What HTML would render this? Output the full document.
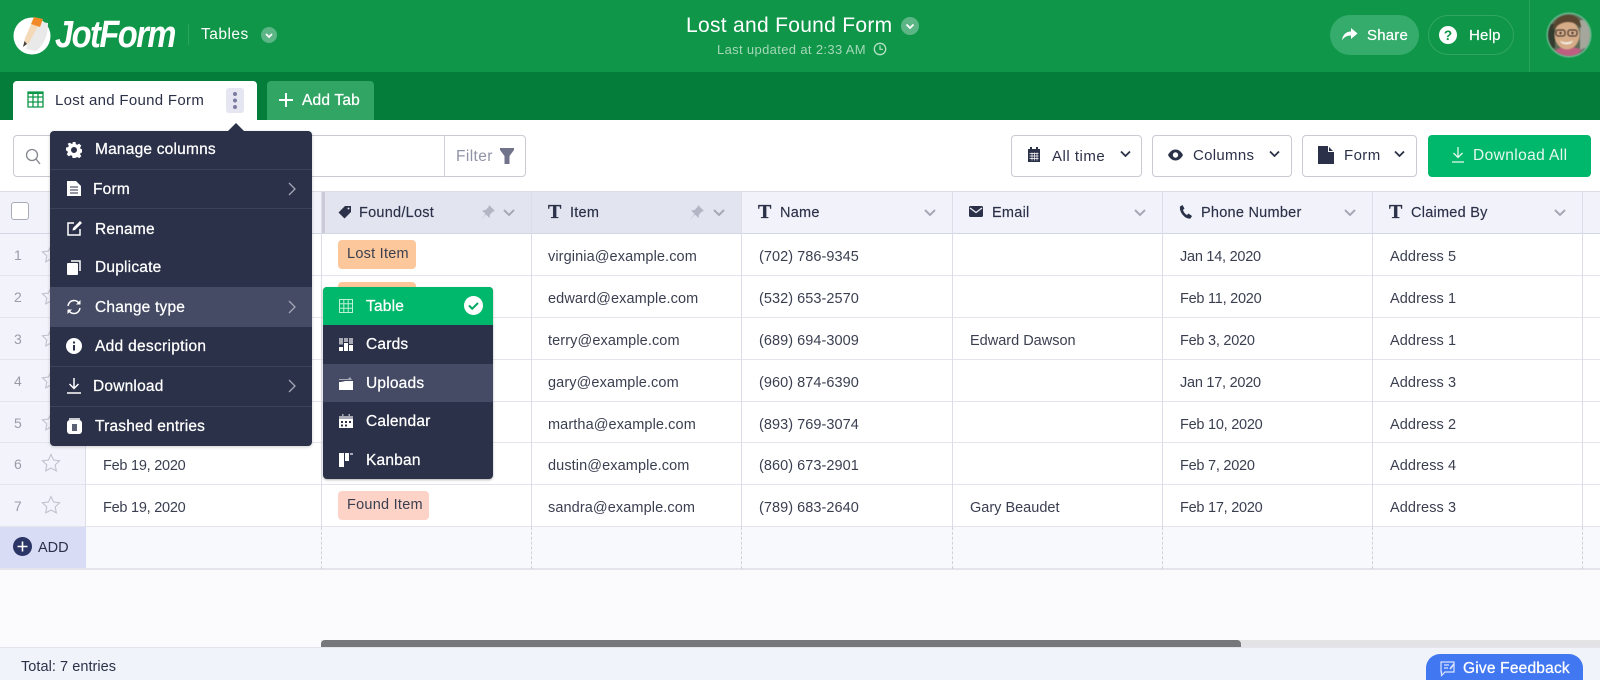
<!DOCTYPE html>
<html><head><meta charset="utf-8"><title>Lost and Found Form</title>
<style>
*{box-sizing:border-box}
html,body{margin:0;padding:0;background:#fff}
#p{position:relative;width:1600px;height:680px;overflow:hidden;font-family:"Liberation Sans",sans-serif;color:#2b3148;background:#fbfbfe}
.b,.t,svg{position:absolute}
.t{white-space:nowrap;line-height:20px}
.w{color:#fff}
.d{font-size:14.5px;letter-spacing:.1px;color:#3a3f50;margin-top:1px}
.dt{letter-spacing:-.25px}
.ph{letter-spacing:.05px}
.nm{letter-spacing:0}
.h{font-size:14.5px;letter-spacing:.25px;color:#2b3148;-webkit-text-stroke:.15px #2b3148}
.m{font-size:15.5px;color:#fff;letter-spacing:.2px;-webkit-text-stroke:.25px #fff;margin-top:1px}
.n{font-size:14px;color:#9a9ca8;margin-top:1px}
.hl{background:#d4d6e3;height:1px}
.vl{background:#dcdde8;width:1px}
.sep{background:#3b4159;height:1px;left:50px;width:262px}
.ico{fill:#fff}
.btn{background:#fff;border:1px solid #c9cad3;border-radius:4px;top:135px;height:42px}
.T{font-family:'Liberation Serif',serif;font-size:20px;font-weight:bold;color:#2b3148;-webkit-text-stroke:.3px #2b3148}
.dash{top:527px;height:42px;border-left:1px dashed #cfd0d8}
</style></head><body><div id="p">

<!-- header -->
<div class="b" style="left:0;top:0;width:1600px;height:72px;background:#0f9648"></div>
<div class="b" style="left:0;top:72px;width:1600px;height:47.5px;background:#047c3a"></div>
<div class="b" style="left:0;top:119.5px;width:1600px;height:72px;background:#fff"></div>

<!-- logo -->
<svg style="left:12px;top:16px" width="40" height="40" viewBox="0 0 40 40"><circle cx="20" cy="20" r="18.500" fill="#fff"/><path d="M23 5 L36 7 C36 18 33 28 24 35 L14 33 Z" fill="#e9e9e9"/><path d="M22 2 L30 3 L17 27 L11 31 L13 22 Z" fill="#f3d9b8"/><path d="M22 1 L31 3 L28 11 L19 8 Z" fill="#f08a28"/><path d="M11 31 L12.500 25 L15 28 Z" fill="#444"/></svg>
<div class="t w" style="left:55px;top:15px;font-size:38px;line-height:40px;font-weight:bold;font-style:italic;letter-spacing:-1.8px;transform:scaleX(.86);transform-origin:left top">JotForm</div>
<div class="b" style="left:188px;top:24px;width:1px;height:21px;background:#2ba45f"></div>
<div class="t w" style="left:201px;top:25px;font-size:15.500px;letter-spacing:.5px">Tables</div>
<svg style="left:261px;top:27px" width="16" height="16" viewBox="0 0 16 16"><circle cx="8" cy="8" r="8" fill="#5cb585"/><path d="M5 7l3 3 3-3" fill="none" stroke="#fff" stroke-width="1.700"/></svg>

<div class="t w" style="left:686px;top:15px;font-size:21px;line-height:22px;letter-spacing:.3px">Lost and Found Form</div>
<svg style="left:901px;top:17px" width="18" height="18" viewBox="0 0 18 18"><circle cx="9" cy="9" r="9" fill="#5cb585"/><path d="M5.500 7.500l3.500 3.500 3.500-3.500" fill="none" stroke="#fff" stroke-width="1.800"/></svg>
<div class="t" style="left:717px;top:40px;font-size:13px;letter-spacing:.35px;color:#a5d8b9">Last updated at 2:33 AM</div>
<svg style="left:873px;top:42px" width="14" height="14" viewBox="0 0 14 14"><circle cx="7" cy="7" r="5.700" fill="none" stroke="#b8e2c8" stroke-width="1.300"/><path d="M7 3.500V7.300H10" fill="none" stroke="#b8e2c8" stroke-width="1.200"/></svg>

<div class="b" style="left:1330px;top:15px;width:89px;height:40px;border-radius:20px;background:#35ac6b"></div>
<svg style="left:1341px;top:27px" width="17" height="15" viewBox="0 0 17 15"><path d="M10 1l6.500 5.500L10 12V8.500C6 8.500 3 10 1 13.500 1.500 8 5 4.500 10 4.500Z" fill="#fff"/></svg>
<div class="t w" style="left:1367px;top:26px;font-size:15px;letter-spacing:.2px;-webkit-text-stroke:.2px #fff">Share</div>
<div class="b" style="left:1428px;top:15px;width:86px;height:40px;border-radius:20px;border:1px solid #31a564"></div>
<svg style="left:1439px;top:26px" width="18" height="18" viewBox="0 0 18 18"><circle cx="9" cy="9" r="9" fill="#fff"/><text x="9" y="14" text-anchor="middle" font-family="Liberation Sans" font-size="13.500" font-weight="bold" fill="#0f9648">?</text></svg>
<div class="t w" style="left:1469px;top:26px;font-size:15px;letter-spacing:.2px;-webkit-text-stroke:.2px #fff">Help</div>
<div class="b" style="left:1529px;top:0;width:1px;height:72px;background:#28a25d"></div>

<svg style="left:1546px;top:12px;filter:blur(.6px)" width="46" height="46" viewBox="0 0 46 46"><defs><clipPath id="a"><circle cx="23" cy="23" r="21"/></clipPath></defs><circle cx="23" cy="23" r="22.500" fill="#6cba90"/><g clip-path="url(#a)"><rect width="46" height="46" fill="#5f6b55"/><rect x="34" y="8" width="12" height="30" fill="#a5a79c"/><rect x="0" y="12" width="9" height="24" fill="#333c2e"/><path d="M4 46C7 37 14 35 23 35s15 3 18 11Z" fill="#bd5f80"/><path d="M32 46c1-8 4-11 12-10v10Z" fill="#6d6f6e"/><ellipse cx="21" cy="23" rx="12.500" ry="14.500" fill="#d6ab88"/><path d="M7 18C7 8 14 3 23 3c7 0 12 5 12 13-4-4-8-6-13-6-5 0-10 2-15 8Z" fill="#5a4630"/><rect x="10" y="18" width="9" height="6" rx="2" fill="none" stroke="#2d2623" stroke-width="1"/><rect x="22" y="18" width="9" height="6" rx="2" fill="none" stroke="#2d2623" stroke-width="1"/><circle cx="14.500" cy="21" r="1.100" fill="#2d2623"/><circle cx="26.500" cy="21" r="1.100" fill="#2d2623"/><path d="M14 28.500c3 2.500 9 2.500 13 0-1 5-12 5-13 0Z" fill="#f7f4ee"/></g></svg>

<!-- tabs -->
<div class="b" style="left:12.500px;top:80.500px;width:244.500px;height:40px;background:#fff;border-radius:4px 4px 0 0"></div>
<svg style="left:27px;top:91px" width="17" height="17" viewBox="0 0 17 17"><path d="M1 1h15v15H1zM1 6h15M1 11h15M6 1v15M11 1v15" fill="none" stroke="#0f9648" stroke-width="1.300"/><path d="M1 2h15" stroke="#0f9648" stroke-width="2"/></svg>
<div class="t" style="left:55px;top:90.500px;font-size:15px;letter-spacing:.3px;color:#2b3148">Lost and Found Form</div>
<div class="b" style="left:226px;top:88px;width:18px;height:25px;border-radius:3px;background:#e6e6f3"></div>
<svg style="left:226px;top:88px" width="18" height="25" viewBox="0 0 18 25"><g fill="#7b7da0"><circle cx="9" cy="6" r="2"/><circle cx="9" cy="12.500" r="2"/><circle cx="9" cy="19" r="2"/></g></svg>
<div class="b" style="left:267px;top:80.500px;width:107px;height:39px;background:#30a564;border-radius:4px 4px 0 0"></div>
<svg style="left:279px;top:93px" width="14" height="14" viewBox="0 0 14 14"><path d="M7 0v14M0 7h14" stroke="#fff" stroke-width="2"/></svg>
<div class="t w" style="left:302px;top:90.500px;font-size:15.500px;letter-spacing:.2px;-webkit-text-stroke:.25px #fff">Add Tab</div>

<!-- search row -->
<div class="b btn" style="left:13px;width:513px"></div>
<div class="b vl" style="left:444px;top:135px;height:42px;background:#cfd0d8"></div>
<svg style="left:25px;top:148px" width="16" height="17" viewBox="0 0 16 17"><circle cx="7" cy="7" r="5.500" fill="none" stroke="#85878f" stroke-width="1.300"/><path d="M11 11l4 5" stroke="#85878f" stroke-width="1.400"/></svg>
<div class="t" style="left:456px;top:146.500px;font-size:15.500px;letter-spacing:.4px;color:#9093a6">Filter</div>
<svg style="left:500px;top:148px" width="14" height="16" viewBox="0 0 14 16"><path d="M0 0h14v2L9.500 8v8H4.500V8L0 2Z" fill="#70738a"/></svg>

<div class="b btn" style="left:1011px;width:131px"></div>
<svg style="left:1027px;top:147px" width="14" height="16" viewBox="0 0 14 16"><path d="M1 2h12v13H1z" fill="#2b3148"/><path d="M3 0h2v3H3zM9 0h2v3H9z" fill="#2b3148"/><path d="M2.500 6.500h9M2.500 9h9M2.500 11.500h9M5 5.500v8M7.500 5.500v8M10 5.500v8" stroke="#fff" stroke-width=".7"/></svg>
<div class="t" style="left:1052px;top:147px;font-size:15px;letter-spacing:.5px;color:#2b3148">All time</div>
<svg style="left:1120px;top:150px" width="11" height="8" viewBox="0 0 11 8"><path d="M1 1.500l4.500 4.500L10 1.500" fill="none" stroke="#2b3148" stroke-width="1.800"/></svg>

<div class="b btn" style="left:1152px;width:140px"></div>
<svg style="left:1168px;top:149px" width="15" height="12" viewBox="0 0 15 12"><path d="M0 6C2 2 5 .5 7.500 .5S13 2 15 6c-2 4-5 5.500-7.500 5.500S2 10 0 6Z" fill="#2b3148"/><circle cx="7.500" cy="6" r="2.700" fill="#fff"/></svg>
<div class="t" style="left:1193px;top:146px;font-size:15px;letter-spacing:.3px;color:#2b3148">Columns</div>
<svg style="left:1269px;top:150px" width="11" height="8" viewBox="0 0 11 8"><path d="M1 1.500l4.500 4.500L10 1.500" fill="none" stroke="#2b3148" stroke-width="1.800"/></svg>

<div class="b btn" style="left:1302px;width:115px"></div>
<svg style="left:1318px;top:146px" width="16" height="18" viewBox="0 0 16 18"><path d="M0 0h10l6 6v12H0Z" fill="#2b3148"/><path d="M10.500 0v5.500H16" fill="none" stroke="#fff" stroke-width="1"/></svg>
<div class="t" style="left:1344px;top:146px;font-size:15px;letter-spacing:.4px;color:#2b3148">Form</div>
<svg style="left:1394px;top:150px" width="11" height="8" viewBox="0 0 11 8"><path d="M1 1.500l4.500 4.500L10 1.500" fill="none" stroke="#2b3148" stroke-width="1.800"/></svg>

<div class="b" style="left:1428px;top:135px;width:163px;height:42px;background:#00b86b;border-radius:4px"></div>
<svg style="left:1451px;top:147px" width="14" height="16" viewBox="0 0 14 16"><path d="M7 0v10M2.500 6L7 10.500 11.500 6M1 15h12" fill="none" stroke="#e6f8ef" stroke-width="1.300"/></svg>
<div class="t w" style="left:1473px;top:146px;font-size:15.500px;letter-spacing:.4px;color:#e6f8ef">Download All</div>

<!-- table head -->
<div class="b" style="left:0;top:191px;width:1600px;height:42.500px;background:#f1f2fa;border-top:1px solid #dcdde8;border-bottom:1px solid #d4d6e3"></div>
<div class="b" style="left:321px;top:192px;width:421px;height:41px;background:#e2e4ef"></div>
<div class="b" style="left:321px;top:192px;width:4px;height:41px;background:#c9cbd8"></div>
<div class="b" style="left:0;top:234px;width:86px;height:293px;background:#f3f4fb"></div>
<div class="b" style="left:86px;top:234px;width:1514px;height:293px;background:#fff"></div>
<div class="b" style="left:0;top:527px;width:86px;height:42px;background:#d9dcf5"></div>
<div class="b" style="left:86px;top:527px;width:1514px;height:42px;background:#f8f9fd"></div>

<div class="b" style="left:11px;top:202px;width:18px;height:18px;border:1.500px solid #a9abb8;border-radius:3px;background:#fff"></div>

<!-- horizontal lines -->
<div class="b hl" style="left:0;top:275px;width:1600px;background:#e3e4ec"></div>
<div class="b hl" style="left:0;top:317px;width:1600px;background:#e3e4ec"></div>
<div class="b hl" style="left:0;top:359px;width:1600px;background:#e3e4ec"></div>
<div class="b hl" style="left:0;top:401px;width:1600px;background:#e3e4ec"></div>
<div class="b hl" style="left:0;top:442px;width:1600px;background:#e3e4ec"></div>
<div class="b hl" style="left:0;top:484px;width:1600px;background:#e3e4ec"></div>
<div class="b hl" style="left:0;top:526px;width:1600px;background:#e3e4ec"></div>
<div class="b hl" style="left:0;top:568px;width:1600px;background:#e3e4ec;height:1.500px"></div>

<!-- vertical lines -->
<div class="b vl" style="left:85px;top:234px;height:293px"></div>
<div class="b vl" style="left:321px;top:192px;height:335px"></div>
<div class="b vl" style="left:531px;top:192px;height:335px"></div>
<div class="b vl" style="left:741px;top:192px;height:335px"></div>
<div class="b vl" style="left:952px;top:192px;height:335px"></div>
<div class="b vl" style="left:1162px;top:192px;height:335px"></div>
<div class="b vl" style="left:1372px;top:192px;height:335px"></div>
<div class="b vl" style="left:1582px;top:192px;height:335px"></div>
<div class="b dash" style="left:321px"></div>
<div class="b dash" style="left:531px"></div>
<div class="b dash" style="left:741px"></div>
<div class="b dash" style="left:952px"></div>
<div class="b dash" style="left:1162px"></div>
<div class="b dash" style="left:1372px"></div>
<div class="b dash" style="left:1582px"></div>

<!-- head cells -->
<svg style="left:338px;top:205px" width="14" height="14" viewBox="0 0 14 14"><path d="M7 1h6v6l-6.500 6.500L.5 7.500Z" fill="#2b3148"/><circle cx="10.500" cy="3.500" r="1" fill="#e2e4ef"/></svg>
<div class="t h" style="left:359px;top:203px">Found/Lost</div>
<svg style="left:480px;top:205px" width="15" height="15" viewBox="0 0 15 15"><path d="M9 0l6 6-2 .5-3 3-.5 3.500L6 9.500 1 14.500 5.500 9 2 5.500l3.500-.5 3-3Z" fill="#b3b5c4"/></svg>
<svg style="left:503px;top:209px" width="12" height="8" viewBox="0 0 12 8"><path d="M1 1l5 5 5-5" fill="none" stroke="#a6a8b5" stroke-width="2"/></svg>

<div class="t T" style="left:548px;top:202px">T</div>
<div class="t h" style="left:570px;top:203px">Item</div>
<svg style="left:689px;top:205px" width="15" height="15" viewBox="0 0 15 15"><path d="M9 0l6 6-2 .5-3 3-.5 3.500L6 9.500 1 14.500 5.500 9 2 5.500l3.500-.5 3-3Z" fill="#b3b5c4"/></svg>
<svg style="left:713px;top:209px" width="12" height="8" viewBox="0 0 12 8"><path d="M1 1l5 5 5-5" fill="none" stroke="#a6a8b5" stroke-width="2"/></svg>

<div class="t T" style="left:758px;top:202px">T</div>
<div class="t h" style="left:780px;top:203px">Name</div>
<svg style="left:924px;top:209px" width="12" height="8" viewBox="0 0 12 8"><path d="M1 1l5 5 5-5" fill="none" stroke="#a6a8b5" stroke-width="2"/></svg>

<svg style="left:969px;top:206px" width="14" height="11" viewBox="0 0 14 11"><rect width="14" height="11" rx="1.500" fill="#2b3148"/><path d="M1 2l6 4.500L13 2" fill="none" stroke="#f1f2fa" stroke-width="1.200"/></svg>
<div class="t h" style="left:992px;top:203px">Email</div>
<svg style="left:1134px;top:209px" width="12" height="8" viewBox="0 0 12 8"><path d="M1 1l5 5 5-5" fill="none" stroke="#a6a8b5" stroke-width="2"/></svg>

<svg style="left:1179px;top:205px" width="13" height="14" viewBox="0 0 13 14"><path d="M1 1.500L3.500 0l2 3.500-1.500 1.500c.5 2 2 4 4 5l1.500-1.500 3.500 2.500-1.500 2.500C6 14.500 0 7 1 1.500Z" fill="#2b3148"/></svg>
<div class="t h" style="left:1201px;top:203px">Phone Number</div>
<svg style="left:1344px;top:209px" width="12" height="8" viewBox="0 0 12 8"><path d="M1 1l5 5 5-5" fill="none" stroke="#a6a8b5" stroke-width="2"/></svg>

<div class="t T" style="left:1389px;top:202px">T</div>
<div class="t h" style="left:1411px;top:203px">Claimed By</div>
<svg style="left:1554px;top:209px" width="12" height="8" viewBox="0 0 12 8"><path d="M1 1l5 5 5-5" fill="none" stroke="#a6a8b5" stroke-width="2"/></svg>

<!-- row numbers & stars -->
<div class="t n" style="left:14px;top:244px">1</div>
<div class="t n" style="left:14px;top:286px">2</div>
<div class="t n" style="left:14px;top:328px">3</div>
<div class="t n" style="left:14px;top:370px">4</div>
<div class="t n" style="left:14px;top:412px">5</div>
<div class="t n" style="left:14px;top:453px">6</div>
<div class="t n" style="left:14px;top:495px">7</div>
<svg style="left:41px;top:244px" width="20" height="20" viewBox="0 0 20 20"><path d="M10 1.500l2.600 5.500 6 .8-4.400 4.100 1.100 6L10 15l-5.300 2.900 1.100-6L1.400 7.800l6-.8Z" fill="none" stroke="#c0c1cc" stroke-width="1.100"/></svg>
<svg style="left:41px;top:286px" width="20" height="20" viewBox="0 0 20 20"><path d="M10 1.500l2.600 5.500 6 .8-4.400 4.100 1.100 6L10 15l-5.300 2.900 1.100-6L1.400 7.800l6-.8Z" fill="none" stroke="#c0c1cc" stroke-width="1.100"/></svg>
<svg style="left:41px;top:328px" width="20" height="20" viewBox="0 0 20 20"><path d="M10 1.500l2.600 5.500 6 .8-4.400 4.100 1.100 6L10 15l-5.300 2.900 1.100-6L1.400 7.800l6-.8Z" fill="none" stroke="#c0c1cc" stroke-width="1.100"/></svg>
<svg style="left:41px;top:370px" width="20" height="20" viewBox="0 0 20 20"><path d="M10 1.500l2.600 5.500 6 .8-4.400 4.100 1.100 6L10 15l-5.300 2.900 1.100-6L1.400 7.800l6-.8Z" fill="none" stroke="#c0c1cc" stroke-width="1.100"/></svg>
<svg style="left:41px;top:412px" width="20" height="20" viewBox="0 0 20 20"><path d="M10 1.500l2.600 5.500 6 .8-4.400 4.100 1.100 6L10 15l-5.300 2.900 1.100-6L1.400 7.800l6-.8Z" fill="none" stroke="#c0c1cc" stroke-width="1.100"/></svg>
<svg style="left:41px;top:453px" width="20" height="20" viewBox="0 0 20 20"><path d="M10 1.500l2.600 5.500 6 .8-4.400 4.100 1.100 6L10 15l-5.300 2.900 1.100-6L1.400 7.800l6-.8Z" fill="none" stroke="#c0c1cc" stroke-width="1.100"/></svg>
<svg style="left:41px;top:495px" width="20" height="20" viewBox="0 0 20 20"><path d="M10 1.500l2.600 5.500 6 .8-4.400 4.100 1.100 6L10 15l-5.300 2.900 1.100-6L1.400 7.800l6-.8Z" fill="none" stroke="#c0c1cc" stroke-width="1.100"/></svg>

<!-- dates -->
<div class="t d dt" style="left:103px;top:455px">Feb 19, 2020</div>
<div class="t d dt" style="left:103px;top:497px">Feb 19, 2020</div>

<!-- tags -->
<div class="b" style="left:338px;top:240px;width:78px;height:29px;border-radius:4px;background:#fcc79a"></div>
<div class="t d" style="left:347px;top:243px;letter-spacing:.25px">Lost Item</div>
<div class="b" style="left:338px;top:282px;width:78px;height:29px;border-radius:4px;background:#fcc79a"></div>
<div class="b" style="left:338px;top:491px;width:91px;height:29px;border-radius:4px;background:#fdd3c8"></div>
<div class="t d" style="left:347px;top:494px;letter-spacing:.25px">Found Item</div>

<!-- data -->
<div class="t d" style="left:548px;top:246px">virginia@example.com</div>
<div class="t d ph" style="left:759px;top:246px">(702) 786-9345</div>
<div class="t d dt" style="left:1180px;top:246px">Jan 14, 2020</div>
<div class="t d" style="left:1390px;top:246px">Address 5</div>

<div class="t d" style="left:548px;top:288px">edward@example.com</div>
<div class="t d ph" style="left:759px;top:288px">(532) 653-2570</div>
<div class="t d dt" style="left:1180px;top:288px">Feb 11, 2020</div>
<div class="t d" style="left:1390px;top:288px">Address 1</div>

<div class="t d" style="left:548px;top:330px">terry@example.com</div>
<div class="t d ph" style="left:759px;top:330px">(689) 694-3009</div>
<div class="t d nm" style="left:970px;top:330px">Edward Dawson</div>
<div class="t d dt" style="left:1180px;top:330px">Feb 3, 2020</div>
<div class="t d" style="left:1390px;top:330px">Address 1</div>

<div class="t d" style="left:548px;top:372px">gary@example.com</div>
<div class="t d ph" style="left:759px;top:372px">(960) 874-6390</div>
<div class="t d dt" style="left:1180px;top:372px">Jan 17, 2020</div>
<div class="t d" style="left:1390px;top:372px">Address 3</div>

<div class="t d" style="left:548px;top:414px">martha@example.com</div>
<div class="t d ph" style="left:759px;top:414px">(893) 769-3074</div>
<div class="t d dt" style="left:1180px;top:414px">Feb 10, 2020</div>
<div class="t d" style="left:1390px;top:414px">Address 2</div>

<div class="t d" style="left:548px;top:455px">dustin@example.com</div>
<div class="t d ph" style="left:759px;top:455px">(860) 673-2901</div>
<div class="t d dt" style="left:1180px;top:455px">Feb 7, 2020</div>
<div class="t d" style="left:1390px;top:455px">Address 4</div>

<div class="t d" style="left:548px;top:497px">sandra@example.com</div>
<div class="t d ph" style="left:759px;top:497px">(789) 683-2640</div>
<div class="t d nm" style="left:970px;top:497px">Gary Beaudet</div>
<div class="t d dt" style="left:1180px;top:497px">Feb 17, 2020</div>
<div class="t d" style="left:1390px;top:497px">Address 3</div>

<!-- add row -->
<svg style="left:13px;top:537px" width="19" height="19" viewBox="0 0 19 19"><circle cx="9.500" cy="9.500" r="9.500" fill="#2b3566"/><path d="M9.500 4.500v10M4.500 9.500h10" stroke="#fff" stroke-width="1.600"/></svg>
<div class="t" style="left:38px;top:537.500px;font-size:14.500px;color:#2b3148">ADD</div>

<!-- scrollbar + footer -->
<div class="b" style="left:321px;top:640px;width:1279px;height:7px;background:#e3e3e6"></div>
<div class="b" style="left:321px;top:640px;width:920px;height:7px;background:#75777b;border-radius:4px 4px 0 0"></div>
<div class="b" style="left:0;top:647px;width:1600px;height:33px;background:#f1f3fb;border-top:1px solid #e3e4ec"></div>
<div class="t d" style="left:21px;top:655.500px;color:#2b3148;letter-spacing:.05px">Total: 7 entries</div>
<div class="b" style="left:1426px;top:654px;width:157px;height:30px;background:#4277f2;border-radius:14px 14px 0 0"></div>
<svg style="left:1440px;top:661px" width="16" height="16" viewBox="0 0 16 16"><path d="M1 1h13v10H5l-3.500 3.500V11H1Z" fill="none" stroke="#dce6ff" stroke-width="1.200"/><path d="M4 4h5M4 7h4" stroke="#dce6ff" stroke-width="1.200"/><path d="M10 8l4-5" stroke="#dce6ff" stroke-width="1.800"/></svg>
<div class="t w" style="left:1463px;top:659px;font-size:15.500px;letter-spacing:.2px;-webkit-text-stroke:.25px #fff">Give Feedback</div>

<!-- main menu -->
<div class="b" style="left:50px;top:131px;width:262px;height:315px;background:#2b3148;border-radius:4px;box-shadow:0 1px 3px rgba(0,0,0,.2)"></div>
<svg style="left:227px;top:123px" width="18" height="9" viewBox="0 0 18 9"><path d="M0 9L9 0l9 9Z" fill="#2b3148"/></svg>
<div class="b" style="left:50px;top:287px;width:262px;height:40px;background:#454b64"></div>
<div class="b sep" style="top:169px"></div>
<div class="b sep" style="top:208px"></div>
<div class="b sep" style="top:366px"></div>
<div class="b sep" style="top:406px"></div>

<svg style="left:66px;top:142px" width="16" height="16" viewBox="0 0 16 16"><path class="ico" fill-rule="evenodd" d="M6.500 0h3l.4 2.200 1.400.6L13.200 1.600l2.100 2.100-1.200 1.900.6 1.400 2.200.4v3l-2.200.4-.6 1.400 1.200 1.900-2.100 2.100-1.900-1.200-1.400.6L9.500 16h-3l-.4-2.200-1.400-.6-1.900 1.200L.700 12.300l1.200-1.900-.6-1.400L0 8.500v-3l2.200-.4.600-1.400L1.600 1.800 3.700.7l1.900 1.200 1.400-.6ZM8 5a3 3 0 100 6 3 3 0 000-6Z"/></svg>
<div class="t m" style="left:95px;top:139px">Manage columns</div>

<svg style="left:67px;top:181px" width="14" height="15" viewBox="0 0 14 15"><path class="ico" d="M0 0h9l5 5v10H0Z"/><path d="M3 6h8M3 9h8M3 12h8" stroke="#2b3148" stroke-width="1"/></svg>
<div class="t m" style="left:93px;top:179px">Form</div>
<svg style="left:288px;top:182px" width="8" height="14" viewBox="0 0 8 14"><path d="M1 1l6 6-6 6" fill="none" stroke="#a5a8b8" stroke-width="1.300"/></svg>

<svg style="left:67px;top:221px" width="15" height="15" viewBox="0 0 15 15"><path d="M7 2H1v12h12V8" fill="none" stroke="#fff" stroke-width="1.500"/><path d="M5.500 9.500L6 7l7-7 2 2-7 7Z" class="ico"/></svg>
<div class="t m" style="left:95px;top:219px">Rename</div>

<svg style="left:67px;top:260px" width="14" height="15" viewBox="0 0 14 15"><rect y="3" width="11" height="12" rx="1" class="ico"/><path d="M4 1h9v10" fill="none" stroke="#fff" stroke-width="1.500"/></svg>
<div class="t m" style="left:95px;top:257px">Duplicate</div>

<svg style="left:66px;top:299px" width="16" height="16" viewBox="0 0 16 16"><path d="M2 7C2.500 3.500 5 1.500 8 1.500c2.200 0 4 1 5 3M14 9c-.5 3.500-3 5.500-6 5.500-2.200 0-4-1-5-3" fill="none" stroke="#fff" stroke-width="1.400"/><path d="M14.500 1v4.500H10ZM1.500 15v-4.500H6Z" class="ico"/></svg>
<div class="t m" style="left:95px;top:297px">Change type</div>
<svg style="left:288px;top:300px" width="8" height="14" viewBox="0 0 8 14"><path d="M1 1l6 6-6 6" fill="none" stroke="#a5a8b8" stroke-width="1.300"/></svg>

<svg style="left:66px;top:338px" width="16" height="16" viewBox="0 0 16 16"><circle cx="8" cy="8" r="8" class="ico"/><path d="M7 7h2v5.500H7ZM7 3.500h2v2H7Z" fill="#2b3148"/></svg>
<div class="t m" style="left:95px;top:336px;letter-spacing:.3px">Add description</div>

<svg style="left:67px;top:378px" width="14" height="16" viewBox="0 0 14 16"><path d="M7 0v10M2.500 6L7 10.500 11.500 6M0 15h14" fill="none" stroke="#fff" stroke-width="1.500"/></svg>
<div class="t m" style="left:93px;top:376px">Download</div>
<svg style="left:288px;top:379px" width="8" height="14" viewBox="0 0 8 14"><path d="M1 1l6 6-6 6" fill="none" stroke="#a5a8b8" stroke-width="1.300"/></svg>

<svg style="left:67px;top:418px" width="15" height="16" viewBox="0 0 15 16"><rect y="2" width="15" height="14" rx="3" class="ico"/><path d="M2 1h11" stroke="#fff" stroke-width="1.500"/><rect x="5" y="6" width="5" height="7" fill="#5b6075"/></svg>
<div class="t m" style="left:95px;top:416px">Trashed entries</div>

<!-- submenu -->
<div class="b" style="left:322.500px;top:286.500px;width:170.500px;height:192px;background:#2b3148;border-radius:4px;box-shadow:0 1px 2px rgba(0,0,0,.3);overflow:hidden">
 <div class="b" style="left:0;top:0;width:171px;height:38.500px;background:#00b86b"></div>
 <div class="b" style="left:0;top:77px;width:171px;height:38.500px;background:#454b64"></div>
</div>
<svg style="left:339px;top:299px" width="14" height="14" viewBox="0 0 14 14"><path d="M.5.500h13v13H.5zM.5 4.800h13M.5 9.200h13M4.800.500v13M9.200.500v13" fill="none" stroke="#bff0d8" stroke-width="1"/></svg>
<div class="t m" style="left:366px;top:296px">Table</div>
<svg style="left:464px;top:296px" width="19" height="19" viewBox="0 0 19 19"><circle cx="9.500" cy="9.500" r="9.500" fill="#fff"/><path d="M5 9.500l3.200 3.200L14 7" fill="none" stroke="#00a862" stroke-width="2"/></svg>

<svg style="left:339px;top:338px" width="14" height="13" viewBox="0 0 14 13"><rect width="4" height="6.500" fill="#a7a9b5"/><rect x="5" width="4" height="4" fill="#a7a9b5"/><rect x="10" width="4" height="6" fill="#a7a9b5"/><rect y="9" width="4" height="4" fill="#fff"/><rect x="5" y="5" width="4" height="8" fill="#fff"/><rect x="10" y="7" width="4" height="6" fill="#fff"/></svg>
<div class="t m" style="left:366px;top:334px">Cards</div>

<svg style="left:339px;top:376px" width="14" height="14" viewBox="0 0 14 14"><path d="M0 3h9l2-2 2 3H0Z" fill="#a7a9b5"/><path d="M0 6c4 0 5-1 7-1h7v9H0Z" fill="#fff"/></svg>
<div class="t m" style="left:366px;top:373px">Uploads</div>

<svg style="left:339px;top:414px" width="14" height="14" viewBox="0 0 14 14"><rect y="2" width="14" height="12" fill="#fff"/><path d="M3 0h1.500v2H3zM9.500 0H11v2H9.500zM0 2h14v3H0z" fill="#a7a9b5"/><path d="M2 7h2v2H2zM6 7h2v2H6zM10 7h2v2h-2zM2 10.500h2v2H2zM6 10.500h2v2H6z" fill="#2b3148"/></svg>
<div class="t m" style="left:366px;top:411px">Calendar</div>

<svg style="left:339px;top:453px" width="14" height="14" viewBox="0 0 14 14"><rect width="5" height="14" fill="#fff"/><rect x="6" width="4" height="8" fill="#fff"/><rect x="11" width="3" height="2" fill="#a7a9b5"/></svg>
<div class="t m" style="left:366px;top:450px">Kanban</div>

</div></body></html>
